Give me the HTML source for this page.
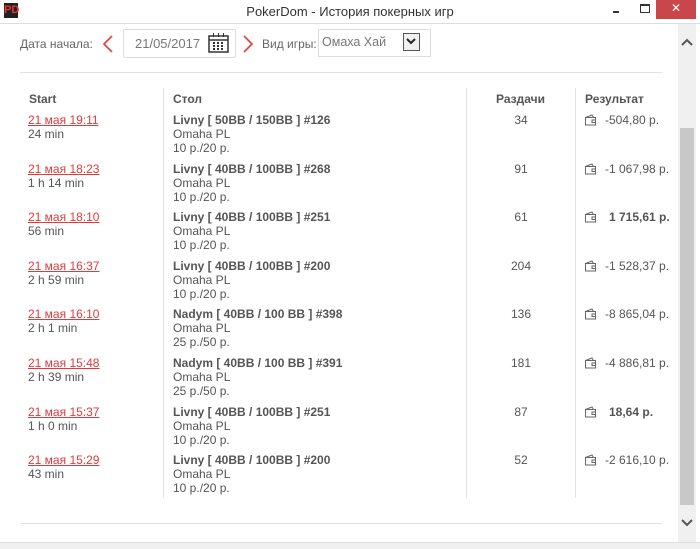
<!DOCTYPE html><html><head><meta charset="utf-8"><style>
body{margin:0;width:700px;height:548px;background:#fff;font-family:"Liberation Sans",sans-serif;position:relative;overflow:hidden;font-size:12px;color:#555}
.a{position:absolute;white-space:nowrap}
.d{color:#e03a3a;text-decoration:underline}
.b{font-weight:bold;color:#555}
.vs{position:absolute;width:1px;background:#e2e2e2}
</style></head><body>
<div class="a" style="left:4px;top:3px;width:14px;height:15px;background:#222;color:#e33;font:bold 11px 'Liberation Sans';line-height:15px;text-align:center">P<span style="color:#e33">D</span></div>
<div class="a" style="left:0;width:700px;top:4px;text-align:center;font-size:13px;color:#333">PokerDom - История покерных игр</div>
<div class="a" style="left:613px;top:11px;width:6px;height:2px;background:#333"></div>
<div class="a" style="left:640px;top:4px;width:8px;height:6px;border:1px solid #333;border-top-width:2px"></div>
<div class="a" style="left:656px;top:0;width:40px;height:19px;background:#c9464a;color:#fff;text-align:center;font-size:12px;line-height:17px">✕</div>
<div class="a" style="left:0;top:23px;width:700px;height:1px;background:#ddd"></div>
<div class="a" style="left:20px;top:37px;font-size:12px;color:#666">Дата начала:</div>
<svg class="a" style="left:102px;top:35px" width="12" height="18"><path d="M10 1 L2 9 L10 17" fill="none" stroke="#e04848" stroke-width="1.8"/></svg>
<div class="a" style="left:123px;top:29px;width:111px;height:27px;border:1px solid #ddd;border-radius:2px"></div>
<div class="a" style="left:135px;top:36px;font-size:13px;color:#777">21/05/2017</div>
<svg class="a" style="left:208px;top:33px" width="21" height="20"><rect x="1" y="3" width="19" height="16" fill="none" stroke="#333" stroke-width="1.5"/><line x1="1" y1="7" x2="20" y2="7" stroke="#333" stroke-width="1.5"/><g fill="#333"><rect x="5" y="9" width="2" height="2"/><rect x="9" y="9" width="2" height="2"/><rect x="13" y="9" width="2" height="2"/><rect x="5" y="12" width="2" height="2"/><rect x="9" y="12" width="2" height="2"/><rect x="13" y="12" width="2" height="2"/><rect x="5" y="15" width="2" height="2"/><rect x="9" y="15" width="2" height="2"/><rect x="13" y="15" width="2" height="2"/><rect x="5" y="0" width="1" height="4"/><rect x="10" y="0" width="1" height="4"/><rect x="15" y="0" width="1" height="4"/></g></svg>
<svg class="a" style="left:242px;top:35px" width="12" height="18"><path d="M2 1 L10 9 L2 17" fill="none" stroke="#e04848" stroke-width="1.8"/></svg>
<div class="a" style="left:262px;top:37px;font-size:12px;color:#666">Вид игры:</div>
<div class="a" style="left:318px;top:29px;width:111px;height:26px;border:1px solid #ddd"></div>
<div class="a" style="left:322px;top:35px;font-size:12.5px;color:#777">Омаха Хай</div>
<div class="a" style="left:403px;top:33px;width:15px;height:16px;border:1px solid #555;background:#f0f0f0"></div>
<svg class="a" style="left:405px;top:37px" width="12" height="9"><path d="M2 2 L6 6 L10 2" fill="none" stroke="#222" stroke-width="2"/></svg>
<div class="a" style="left:20px;top:72px;width:642px;height:1px;background:#e2e2e2"></div>
<div class="a" style="left:20px;top:523px;width:642px;height:1px;background:#e2e2e2"></div>
<div class="vs" style="left:163px;top:88px;height:410px"></div>
<div class="vs" style="left:466px;top:88px;height:410px"></div>
<div class="vs" style="left:575px;top:88px;height:410px"></div>
<div class="a b" style="left:29px;top:92px">Start</div>
<div class="a b" style="left:173px;top:92px">Стол</div>
<div class="a b" style="left:496px;top:92px">Раздачи</div>
<div class="a b" style="left:585px;top:92px">Результат</div>
<div class="a" style="left:678px;top:24px;width:18px;height:519px;background:#f0f0f0"></div>
<div class="a" style="left:680px;top:128px;width:14px;height:377px;background:#c8c8c8"></div>
<svg class="a" style="left:681px;top:38px" width="12" height="8"><path d="M1 7 L6 2 L11 7" fill="none" stroke="#555" stroke-width="2"/></svg>
<svg class="a" style="left:681px;top:519px" width="12" height="8"><path d="M1 1 L6 6 L11 1" fill="none" stroke="#555" stroke-width="2"/></svg>
<div class="a" style="left:0;top:542px;width:700px;height:6px;background:#f0f0f0;border-top:1px solid #ddd"></div>
<div id="rows"></div>
<script>
var R=[["21 мая 19:11","24 min","Livny [ 50BB / 150BB ] #126","10 р./20 р.","34","-504,80 р.",0],
["21 мая 18:23","1 h 14 min","Livny [ 40BB / 100BB ] #268","10 р./20 р.","91","-1 067,98 р.",0],
["21 мая 18:10","56 min","Livny [ 40BB / 100BB ] #251","10 р./20 р.","61","1 715,61 р.",1],
["21 мая 16:37","2 h 59 min","Livny [ 40BB / 100BB ] #200","10 р./20 р.","204","-1 528,37 р.",0],
["21 мая 16:10","2 h 1 min","Nadym [ 40BB / 100 BB ] #398","25 р./50 р.","136","-8 865,04 р.",0],
["21 мая 15:48","2 h 39 min","Nadym [ 40BB / 100 BB ] #391","25 р./50 р.","181","-4 886,81 р.",0],
["21 мая 15:37","1 h 0 min","Livny [ 40BB / 100BB ] #251","10 р./20 р.","87","18,64 р.",1],
["21 мая 15:29","43 min","Livny [ 40BB / 100BB ] #200","10 р./20 р.","52","-2 616,10 р.",0]];
var h="";R.forEach(function(r,i){var y=113+i*48.6;
h+='<div class="a d" style="left:28px;top:'+y+'px">'+r[0]+'</div><div class="a" style="left:28px;top:'+(y+14)+'px">'+r[1]+'</div>';
h+='<div class="a b" style="left:173px;top:'+y+'px">'+r[2]+'</div><div class="a" style="left:173px;top:'+(y+14)+'px">Omaha PL</div><div class="a" style="left:173px;top:'+(y+28)+'px">'+r[3]+'</div>';
h+='<div class="a" style="left:481px;width:80px;text-align:center;top:'+y+'px">'+r[4]+'</div>';
h+='<svg class="a" style="left:584px;top:'+(y+1)+'px" width="13" height="12"><path d="M1.5 3.5 H11.5 V11 H1.5 Z M1.5 3.5 L8 1 L9.5 3.5 M8 6 H11.5 V8.5 H8 Z" fill="none" stroke="#666" stroke-width="1"/></svg>';
h+='<div class="a'+(r[6]?' b':'')+'" style="left:'+(r[6]?609:605)+'px;top:'+y+'px">'+r[5]+'</div>';});
document.getElementById("rows").innerHTML=h;
</script>
</body></html>
